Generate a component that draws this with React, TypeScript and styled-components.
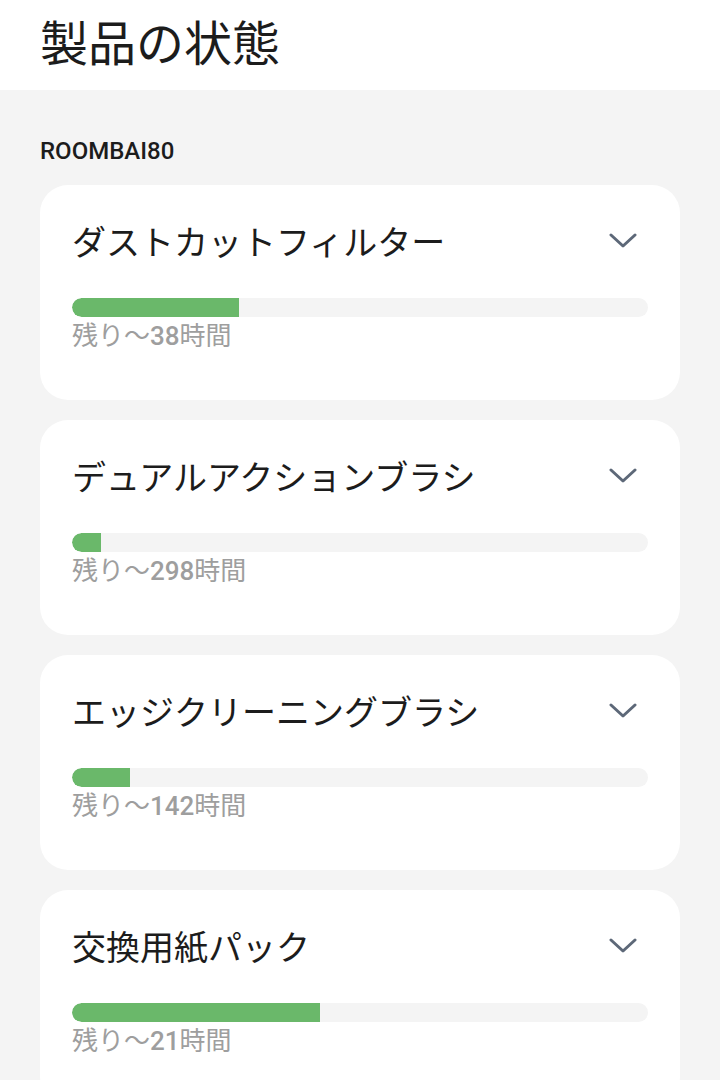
import React from "react";
import styled, { createGlobalStyle } from "styled-components";

const GlobalStyle = createGlobalStyle`
  html, body {
    margin: 0;
    padding: 0;
    background: #f4f4f4;
    font-family: Roboto, "Noto Sans CJK JP", sans-serif;
  }
`;

const parts = [
  { name: "ダストカットフィルター", hours: 38, ratio: 0.29 },
  { name: "デュアルアクションブラシ", hours: 298, ratio: 0.05 },
  { name: "エッジクリーニングブラシ", hours: 142, ratio: 0.1 },
  { name: "交換用紙パック", hours: 21, ratio: 0.43 },
];

const Header = styled.header`
  height: 90px;
  box-sizing: border-box;
  background: #ffffff;
  padding: 14px 40px 0;
`;

const PageTitle = styled.h1`
  margin: 0;
  font-size: 48px;
  line-height: 52px;
  font-weight: 400;
  color: #1c1c1c;
  font-family: "Noto Sans CJK JP", sans-serif;
`;

const Section = styled.main`
  padding: 47px 40px 0;
`;

const DeviceLabel = styled.div`
  font-size: 24px;
  line-height: 28px;
  font-weight: 500;
  color: #1c1c1c;
  margin-bottom: 20px;
`;

const CardList = styled.div`
  display: flex;
  flex-direction: column;
  gap: 20px;
`;

const Card = styled.section`
  background: #ffffff;
  border-radius: 28px;
  padding: 36px 32px 45px;
`;

const CardHead = styled.div`
  display: flex;
  align-items: center;
  justify-content: space-between;
  height: 40px;
`;

const PartName = styled.h2`
  margin: 0;
  font-size: 34px;
  line-height: 40px;
  font-weight: 400;
  color: #1c1c1c;
  font-family: "Noto Sans CJK JP", sans-serif;
`;

const Chevron = styled.svg`
  width: 28px;
  height: 16px;
  margin-right: 11px;
`;

const Track = styled.div`
  margin-top: 37px;
  height: 19px;
  border-radius: 10px;
  background: #f4f4f4;
  overflow: hidden;
`;

const Fill = styled.div`
  height: 100%;
  background: #6ab86a;
  border-radius: 10px 0 0 10px;
`;

const Remaining = styled.div`
  font-size: 26px;
  line-height: 38px;
  color: #9e9e9e;
  font-family: Roboto, "Noto Sans CJK JP", sans-serif;
`;

const Hours = styled.span`
  font-weight: 500;
`;

const App = () => {
  return (
    <>
      <GlobalStyle />
      <Header>
        <PageTitle>製品の状態</PageTitle>
      </Header>
      <Section>
        <DeviceLabel>ROOMBAI80</DeviceLabel>
        <CardList>
          {parts.map((p) => (
            <Card key={p.name}>
              <CardHead>
                <PartName>{p.name}</PartName>
                <Chevron viewBox="0 0 28 16" fill="none">
                  <polyline
                    points="2,2 14,13 26,2"
                    stroke="#5d6878"
                    strokeWidth="3"
                    strokeLinecap="round"
                    strokeLinejoin="round"
                  />
                </Chevron>
              </CardHead>
              <Track>
                <Fill style={{ width: `${p.ratio * 100}%` }} />
              </Track>
              <Remaining>
                残り〜<Hours>{p.hours}</Hours>時間
              </Remaining>
            </Card>
          ))}
        </CardList>
      </Section>
    </>
  );
};

export default App;
